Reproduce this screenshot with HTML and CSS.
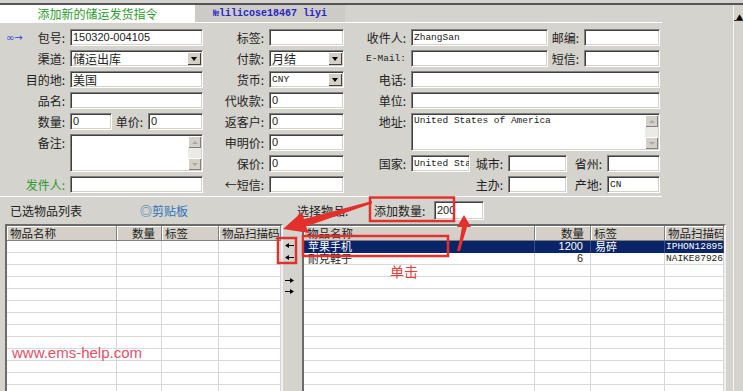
FILE: index.html
```html
<!DOCTYPE html>
<html lang="zh-CN">
<head>
    <meta charset="UTF-8">
    <meta name="viewport" content="width=device-width, initial-scale=1.0">
    <title>添加新的储运发货指令</title>
    <link rel="stylesheet" href="styles.css">
</head>
<body>
    <div class="topbar"></div>
    <div class="window">
        <div class="content">
            <div class="tabs">
                <div class="tab active">添加新的储运发货指令</div>
                <div class="tab other">№lilicose18467 liyi</div>
            </div>

            <div class="form-panel">
                <div class="form-grid">
                    <!-- row 1 -->
                    <div class="lbl first"><span class="link-icon">∞→</span><span>包号:</span></div>
                    <div class="field sans">150320-004105</div>
                    <div class="lbl">标签:</div>
                    <div class="field"></div>
                    <div class="lbl">收件人:</div>
                    <div class="split">
                        <div class="field mono w137">ZhangSan</div>
                        <div class="lbl w36">邮编:</div>
                        <div class="field w76"></div>
                    </div>

                    <!-- row 2 -->
                    <div class="lbl">渠道:</div>
                    <div class="field select"><span class="val">储运出库</span><span class="drop"><i></i></span></div>
                    <div class="lbl">付款:</div>
                    <div class="field select"><span class="val">月结</span><span class="drop"><i></i></span></div>
                    <div class="lbl mono">E-Mail:</div>
                    <div class="split">
                        <div class="field w137"></div>
                        <div class="lbl w36">短信:</div>
                        <div class="field w76"></div>
                    </div>

                    <!-- row 3 -->
                    <div class="lbl">目的地:</div>
                    <div class="field">美国</div>
                    <div class="lbl">货币:</div>
                    <div class="field select"><span class="val mono">CNY</span><span class="drop"><i></i></span></div>
                    <div class="lbl">电话:</div>
                    <div class="field"></div>

                    <!-- row 4 -->
                    <div class="lbl">品名:</div>
                    <div class="field"></div>
                    <div class="lbl">代收款:</div>
                    <div class="field sans">0</div>
                    <div class="lbl">单位:</div>
                    <div class="field"></div>

                    <!-- row 5 -->
                    <div class="lbl">数量:</div>
                    <div class="split">
                        <div class="field sans w42">0</div>
                        <div class="lbl w36">单价:</div>
                        <div class="field sans w55">0</div>
                    </div>
                    <div class="lbl">返客户:</div>
                    <div class="field sans">0</div>
                    <div class="lbl">地址:</div>
                    <div class="field area">
                        <span class="area-text mono">United States of America</span>
                        <span class="area-scroll"><b class="up"></b><b class="down"></b></span>
                    </div>

                    <!-- row 6 -->
                    <div class="lbl top">备注:</div>
                    <div class="field area">
                        <span class="area-text"></span>
                        <span class="area-scroll"><b class="up"></b><b class="down"></b></span>
                    </div>
                    <div class="lbl">申明价:</div>
                    <div class="field sans">0</div>
                    <div class="lbl"></div>

                    <!-- row 7 -->
                    <div class="lbl"></div>
                    <div class="lbl">保价:</div>
                    <div class="field sans">0</div>
                    <div class="lbl">国家:</div>
                    <div class="split">
                        <div class="field mono w59">United Sta</div>
                        <div class="lbl w38">城市:</div>
                        <div class="field w59"></div>
                        <div class="lbl w40">省州:</div>
                        <div class="field w53"></div>
                    </div>

                    <!-- row 8 -->
                    <div class="lbl green">发件人:</div>
                    <div class="field"></div>
                    <div class="lbl">←短信:</div>
                    <div class="field"></div>
                    <div class="lbl"></div>
                    <div class="split">
                        <div class="w59"></div>
                        <div class="lbl w38">主办:</div>
                        <div class="field w59"></div>
                        <div class="lbl w40">产地:</div>
                        <div class="field mono w53">CN</div>
                    </div>
                </div>
            </div>

            <div class="list-bar">
                <span class="bar-title">已选物品列表</span>
                <span class="clip">◎剪贴板</span>
                <span class="choose">选择物品:</span>
                <span class="qty-label">添加数量:</span>
                <span class="field sans qty-input">200</span>
            </div>

            <div class="lists">
                <div class="list left">
                    <div class="row head">
                        <span>物品名称</span><span class="num">数量</span><span>标签</span><span>物品扫描码</span>
                    </div>
                    <div class="row"><span></span><span></span><span></span><span></span></div>
                    <div class="row"><span></span><span></span><span></span><span></span></div>
                    <div class="row"><span></span><span></span><span></span><span></span></div>
                    <div class="row"><span></span><span></span><span></span><span></span></div>
                    <div class="row"><span></span><span></span><span></span><span></span></div>
                    <div class="row"><span></span><span></span><span></span><span></span></div>
                    <div class="row"><span></span><span></span><span></span><span></span></div>
                    <div class="row"><span></span><span></span><span></span><span></span></div>
                    <div class="row"><span></span><span></span><span></span><span></span></div>
                    <div class="row"><span></span><span></span><span></span><span></span></div>
                    <div class="row"><span></span><span></span><span></span><span></span></div>
                    <div class="row"><span></span><span></span><span></span><span></span></div>
                    <div class="row"><span></span><span></span><span></span><span></span></div>
                </div>

                <div class="arrows">
                    <svg class="arr" width="9" height="5" viewBox="0 0 9 5"><path d="M0 2.5L4 0V2H9V3H4V5Z"/></svg>
                    <svg class="arr" width="9" height="5" viewBox="0 0 9 5"><path d="M0 2.5L4 0V2H9V3H4V5Z"/></svg>
                    <svg class="arr gap" width="9" height="5" viewBox="0 0 9 5"><path d="M9 2.5L5 0V2H0V3H5V5Z"/></svg>
                    <svg class="arr" width="9" height="5" viewBox="0 0 9 5"><path d="M9 2.5L5 0V2H0V3H5V5Z"/></svg>
                </div>

                <div class="list right">
                    <div class="row head">
                        <span>物品名称</span><span class="num">数量</span><span>标签</span><span>物品扫描码</span>
                    </div>
                    <div class="row selected">
                        <span>苹果手机</span><span class="num">1200</span><span>易碎</span><span class="code">IPHON12895</span>
                    </div>
                    <div class="row">
                        <span>耐克鞋子</span><span class="num">6</span><span></span><span class="code">NAIKE87926</span>
                    </div>
                    <div class="row"><span></span><span></span><span></span><span></span></div>
                    <div class="row"><span></span><span></span><span></span><span></span></div>
                    <div class="row"><span></span><span></span><span></span><span></span></div>
                    <div class="row"><span></span><span></span><span></span><span></span></div>
                    <div class="row"><span></span><span></span><span></span><span></span></div>
                    <div class="row"><span></span><span></span><span></span><span></span></div>
                    <div class="row"><span></span><span></span><span></span><span></span></div>
                    <div class="row"><span></span><span></span><span></span><span></span></div>
                    <div class="row"><span></span><span></span><span></span><span></span></div>
                    <div class="row"><span></span><span></span><span></span><span></span></div>
                    <div class="row"><span></span><span></span><span></span><span></span></div>
                </div>
            </div>
        </div>

        <div class="vscroll">
            <div class="vs-up">▲</div>
        </div>
    </div>

    <!-- red annotations drawn over the screenshot -->
    <svg class="marks" width="743" height="391" viewBox="0 0 743 391">
        <g fill="none" stroke="#e3302d" stroke-width="2.5">
            <rect x="370" y="197.5" width="84" height="23.5"/>
            <rect x="303" y="236" width="145" height="20"/>
            <rect x="278" y="238" width="18" height="25"/>
        </g>
        <g fill="#e3302d">
            <polygon points="283,229 302,212 304,219 372,201 372,203.5 306,226.4 309,233"/>
            <path d="M464 215 L471 227 L467 227 Q463 240 460 251 L457 251 Q460 240 462 227 L457 227 Z"/>
        </g>
    </svg>
    <span class="click-note">单击</span>
    <span class="watermark">www.ems-help.com</span>
</body>
</html>
```

FILE: styles.css
```css
body {
    margin: 0;
    width: 743px;
    height: 391px;
    overflow: hidden;
    position: relative;
    background: #d5d3cd;
    font-family: "Noto Sans CJK SC", sans-serif;
    font-size: 12px;
    color: #222;
}

.topbar {
    height: 3px;
    border-bottom: 2px solid #555;
}

.window {
    display: flex;
    height: 386px;
}

.content {
    width: 733px;
}

/* right edge scroll strip */
.vscroll {
    flex: 1;
    border-left: 1px solid #f4f4f0;
}

.vs-up {
    height: 16px;
    border-bottom: 1px solid #333;
    font-size: 7px;
    line-height: 8px;
    text-align: right;
    padding-top: 8px;
    box-sizing: border-box;
    color: #000;
}

/* tabs */
.tabs {
    display: flex;
    height: 17px;
}

.tab {
    height: 17px;
    line-height: 17px;
    white-space: nowrap;
}

.tab.active {
    width: 195px;
    background: #fff;
    color: #2e9a2e;
    text-align: center;
}

.tab.other {
    width: 150px;
    padding-left: 18px;
    box-sizing: border-box;
    background: #cdcbc5;
    color: #2424c8;
    font-family: "Liberation Mono", monospace;
    font-size: 10px;
    font-weight: bold;
}

/* form */
.form-panel {
    width: 662px;
    border-top: 1px solid #fff;
    border-bottom: 1px solid #fff;
    padding: 6px 0 3px;
}

.form-grid {
    display: grid;
    grid-template-columns: 70px 133px 66px 75px 67px 249px;
    grid-auto-rows: 17px;
    row-gap: 4px;
}

.lbl {
    display: flex;
    align-items: center;
    justify-content: flex-end;
    padding-right: 5px;
    line-height: 17px;
    white-space: nowrap;
    box-sizing: border-box;
}

.lbl.top {
    align-items: flex-start;
}

.lbl.first {
    justify-content: space-between;
    padding-left: 6px;
}

.link-icon {
    color: #2b3fe0;
    font-family: "DejaVu Sans", sans-serif;
    font-size: 10px;
}

.lbl.green {
    color: #2e9a2e;
}

.field {
    display: block;
    height: 17px;
    box-sizing: border-box;
    background: #fff;
    border: 1px solid;
    border-color: #808080 #fff #fff #808080;
    box-shadow: inset 1px 1px 0 #404040, inset -1px -1px 0 #d4d0c8;
    padding-left: 2px;
    line-height: 15px;
    white-space: nowrap;
    overflow: hidden;
}

.sans {
    font-family: "Liberation Sans", sans-serif;
    font-size: 11px;
}

.mono {
    font-family: "Liberation Mono", monospace;
    font-size: 9.5px;
}

.field.select {
    display: flex;
    padding-right: 1px;
}

.field.select .val {
    flex: 1;
}

.drop {
    width: 14px;
    height: 13px;
    margin-top: 1px;
    background: #d4d0c8;
    box-shadow: inset 1px 1px 0 #fff, inset -1px -1px 0 #404040;
    display: flex;
    align-items: center;
    justify-content: center;
}

.drop i {
    border-left: 3.5px solid transparent;
    border-right: 3.5px solid transparent;
    border-top: 4px solid #000;
}

.field.area {
    grid-row: span 2;
    height: 38px;
    display: flex;
    padding-right: 1px;
}

.area-text {
    flex: 1;
    line-height: 14px;
}

.area-scroll {
    width: 13px;
    margin: 1px 0;
    display: flex;
    flex-direction: column;
    justify-content: space-between;
    background: #eceae4;
}

.area-scroll b {
    height: 12px;
    background: #d4d0c8;
    box-shadow: inset 1px 1px 0 #fff, inset -1px -1px 0 #808080;
    display: flex;
    align-items: center;
    justify-content: center;
}

.area-scroll b::after {
    content: '';
    border-left: 3px solid transparent;
    border-right: 3px solid transparent;
}

.area-scroll .up::after {
    border-bottom: 3px solid #a8a8a8;
}

.area-scroll .down::after {
    border-top: 3px solid #a8a8a8;
}

.split {
    display: flex;
}

.w36 { width: 36px; }
.w38 { width: 38px; }
.w40 { width: 40px; }
.w42 { width: 42px; }
.w53 { width: 53px; }
.w55 { width: 55px; }
.w59 { width: 59px; }
.w76 { width: 76px; }
.w137 { width: 137px; }

.split .lbl {
    padding-right: 5px;
}

/* list title bar */
.list-bar {
    display: flex;
    align-items: center;
    height: 27px;
    white-space: nowrap;
}

.bar-title {
    margin-left: 10px;
    width: 130px;
}

.clip {
    width: 157px;
    color: #2f74b8;
}

.choose {
    width: 77px;
}

.qty-label {
    width: 60px;
}

.qty-input {
    width: 50px;
    height: 19px;
    line-height: 17px;
}

/* lists */
.lists {
    display: flex;
    height: 170px;
}

.list {
    background: #fff;
    border: 2px solid;
    border-color: #6c6c6c #f0f0f0 #f0f0f0 #6c6c6c;
    overflow: hidden;
}

.list.left {
    margin-left: 5px;
    width: 278px;
    box-sizing: border-box;
}

.list.right {
    width: 424px;
    box-sizing: border-box;
}

.row {
    display: grid;
    height: 12px;
    font-size: 11px;
}

.list.left .row {
    grid-template-columns: 110px 45px 57px 62px;
}

.list.right .row {
    grid-template-columns: 231px 56px 74px 59px;
}

.row span {
    border-right: 1px solid #d6d6d6;
    border-bottom: 1px solid #d9d9d9;
    padding: 0 4px;
    line-height: 11px;
    white-space: nowrap;
    overflow: hidden;
}

.row.head {
    height: 15px;
    font-size: 11.5px;
}

.row.head span {
    background: #d4d0c8;
    border-right: 1px solid #808080;
    border-bottom: 1px solid #808080;
    box-shadow: inset 1px 1px 0 #fff;
    line-height: 15px;
    padding: 0 2px 0 3px;
}

.row.head .num {
    font-family: "Noto Sans CJK SC", sans-serif;
    font-size: 11.5px;
    padding-right: 6px;
}

.row .num {
    text-align: right;
    font-family: "Liberation Sans", sans-serif;
    font-size: 11px;
    padding-right: 7px;
}

.row .code {
    font-family: "Liberation Mono", monospace;
    font-size: 9.5px;
    padding: 0 0 0 1px;
}

.row.selected span {
    background: #0a246a;
    color: #fff;
    border-right-color: #3a4e88;
    border-bottom-color: #0a246a;
}

/* transfer arrows between lists */
.arrows {
    width: 19px;
    display: flex;
    flex-direction: column;
    padding: 19px 0 0 2px;
    box-sizing: border-box;
}

.arr {
    fill: #000;
}

.arr + .arr {
    margin-top: 7px;
}

.arr.gap {
    margin-top: 18px;
}

.arr.gap + .arr {
    margin-top: 6px;
}

/* annotations */
.marks {
    position: absolute;
    left: 0;
    top: 0;
    pointer-events: none;
}

.click-note {
    position: absolute;
    left: 390px;
    top: 264px;
    color: #e5413c;
    font-size: 14px;
    line-height: 15px;
}

.watermark {
    position: absolute;
    left: 12px;
    top: 345px;
    color: #e4506a;
    font-family: "Liberation Sans", sans-serif;
    font-size: 15px;
    line-height: 15px;
}
```
